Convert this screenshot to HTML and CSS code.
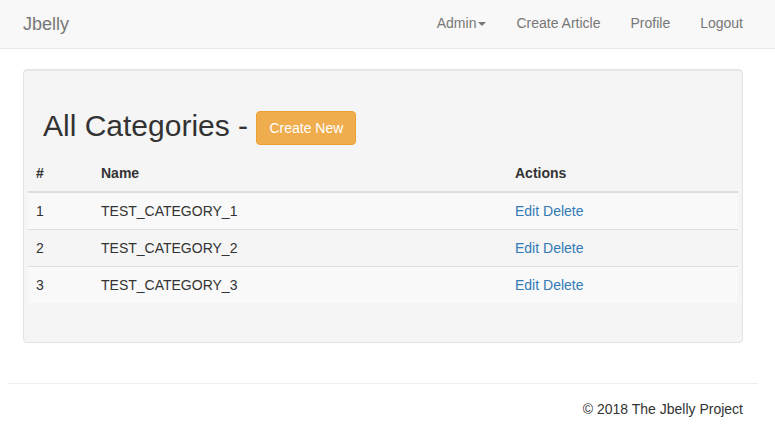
FILE: index.html
```html
<!DOCTYPE html>
<html lang="en">
<head>
<meta charset="utf-8">
<title>Jbelly - All Categories</title>
<link rel="stylesheet" href="styles.css">
</head>
<body>
<nav class="navbar">
  <div class="container nav-inner">
    <a class="brand" href="#">Jbelly</a>
    <ul class="nav">
      <li><a href="#">Admin<span class="caret"></span></a></li>
      <li><a href="#">Create Article</a></li>
      <li><a href="#">Profile</a></li>
      <li><a href="#">Logout</a></li>
    </ul>
  </div>
</nav>
<div class="container">
  <div class="well">
    <h2 class="title">All Categories - <a class="btn btn-warning" href="#">Create New</a></h2>
    <div class="row">
      <table class="table">
        <thead>
          <tr><th class="c-num">#</th><th class="c-name">Name</th><th class="c-act">Actions</th></tr>
        </thead>
        <tbody>
          <tr class="odd"><td>1</td><td>TEST_CATEGORY_1</td><td><a href="#">Edit</a> <a href="#">Delete</a></td></tr>
          <tr><td>2</td><td>TEST_CATEGORY_2</td><td><a href="#">Edit</a> <a href="#">Delete</a></td></tr>
          <tr class="odd"><td>3</td><td>TEST_CATEGORY_3</td><td><a href="#">Edit</a> <a href="#">Delete</a></td></tr>
        </tbody>
      </table>
    </div>
  </div>
  <hr class="rule">
  <footer class="footer">
    <p>&copy; 2018 The Jbelly Project</p>
  </footer>
</div>
</body>
</html>
```
FILE: styles.css
```css
* { box-sizing: border-box; }
html, body { margin: 0; padding: 0; }
body {
  font-family: "Liberation Sans", Arial, sans-serif;
  font-size: 14px;
  line-height: 1.42857143;
  color: #333;
  background: #fff;
}
a { color: #337ab7; text-decoration: none; }

.container {
  width: 750px;
  padding: 0 15px;
  margin-left: 8px;
}

.navbar {
  background: #f8f8f8;
  border-bottom: 1px solid #e7e7e7;
  margin-bottom: 20px;
}
.nav-inner {
  display: flex;
  justify-content: space-between;
  height: 48px;
}
.brand {
  color: #777;
  font-size: 18px;
  line-height: 20px;
  padding: 14px 0;
}
.nav {
  display: flex;
  list-style: none;
  margin: 0 -15px 0 0;
  padding: 0;
}
.nav a {
  display: block;
  color: #777;
  line-height: 20px;
  padding: 13px 15px 15px;
}
.caret {
  display: inline-block;
  width: 0;
  height: 0;
  margin-left: 2px;
  vertical-align: middle;
  border-top: 4px solid #777;
  border-left: 4px solid transparent;
  border-right: 4px solid transparent;
}

.well {
  background: #f5f5f5;
  border: 1px solid #e3e3e3;
  border-radius: 4px;
  box-shadow: inset 0 1px 1px rgba(0,0,0,.05);
  padding: 19px;
  margin-bottom: 20px;
}
.title {
  font-size: 30px;
  font-weight: normal;
  line-height: 1.1;
  margin: 20px 0 10px;
  color: #333;
}
.btn {
  display: inline-block;
  padding: 6px 12px;
  font-size: 14px;
  line-height: 1.42857143;
  border: 1px solid transparent;
  border-radius: 4px;
  vertical-align: middle;
}
.btn-warning {
  background: #f0ad4e;
  border-color: #eea236;
  color: #fff;
}

.row { margin: 0 -15px; }
.table {
  width: 100%;
  border-collapse: collapse;
  border-spacing: 0;
  margin-bottom: 20px;
}
.table th, .table td {
  padding: 8px;
  line-height: 20px;
  text-align: left;
  vertical-align: top;
}
.table th {
  vertical-align: bottom;
  border-bottom: 2px solid #ddd;
  font-weight: bold;
}
.table td { border-top: 1px solid #ddd; }
.table tr.odd { background: #f9f9f9; }
.c-num { width: 65px; }
.c-name { width: 414px; }

.rule {
  border: 0;
  border-top: 1px solid #eee;
  margin: 40px -15px 15px;
}
.footer p {
  margin: 0;
  text-align: right;
}
```
